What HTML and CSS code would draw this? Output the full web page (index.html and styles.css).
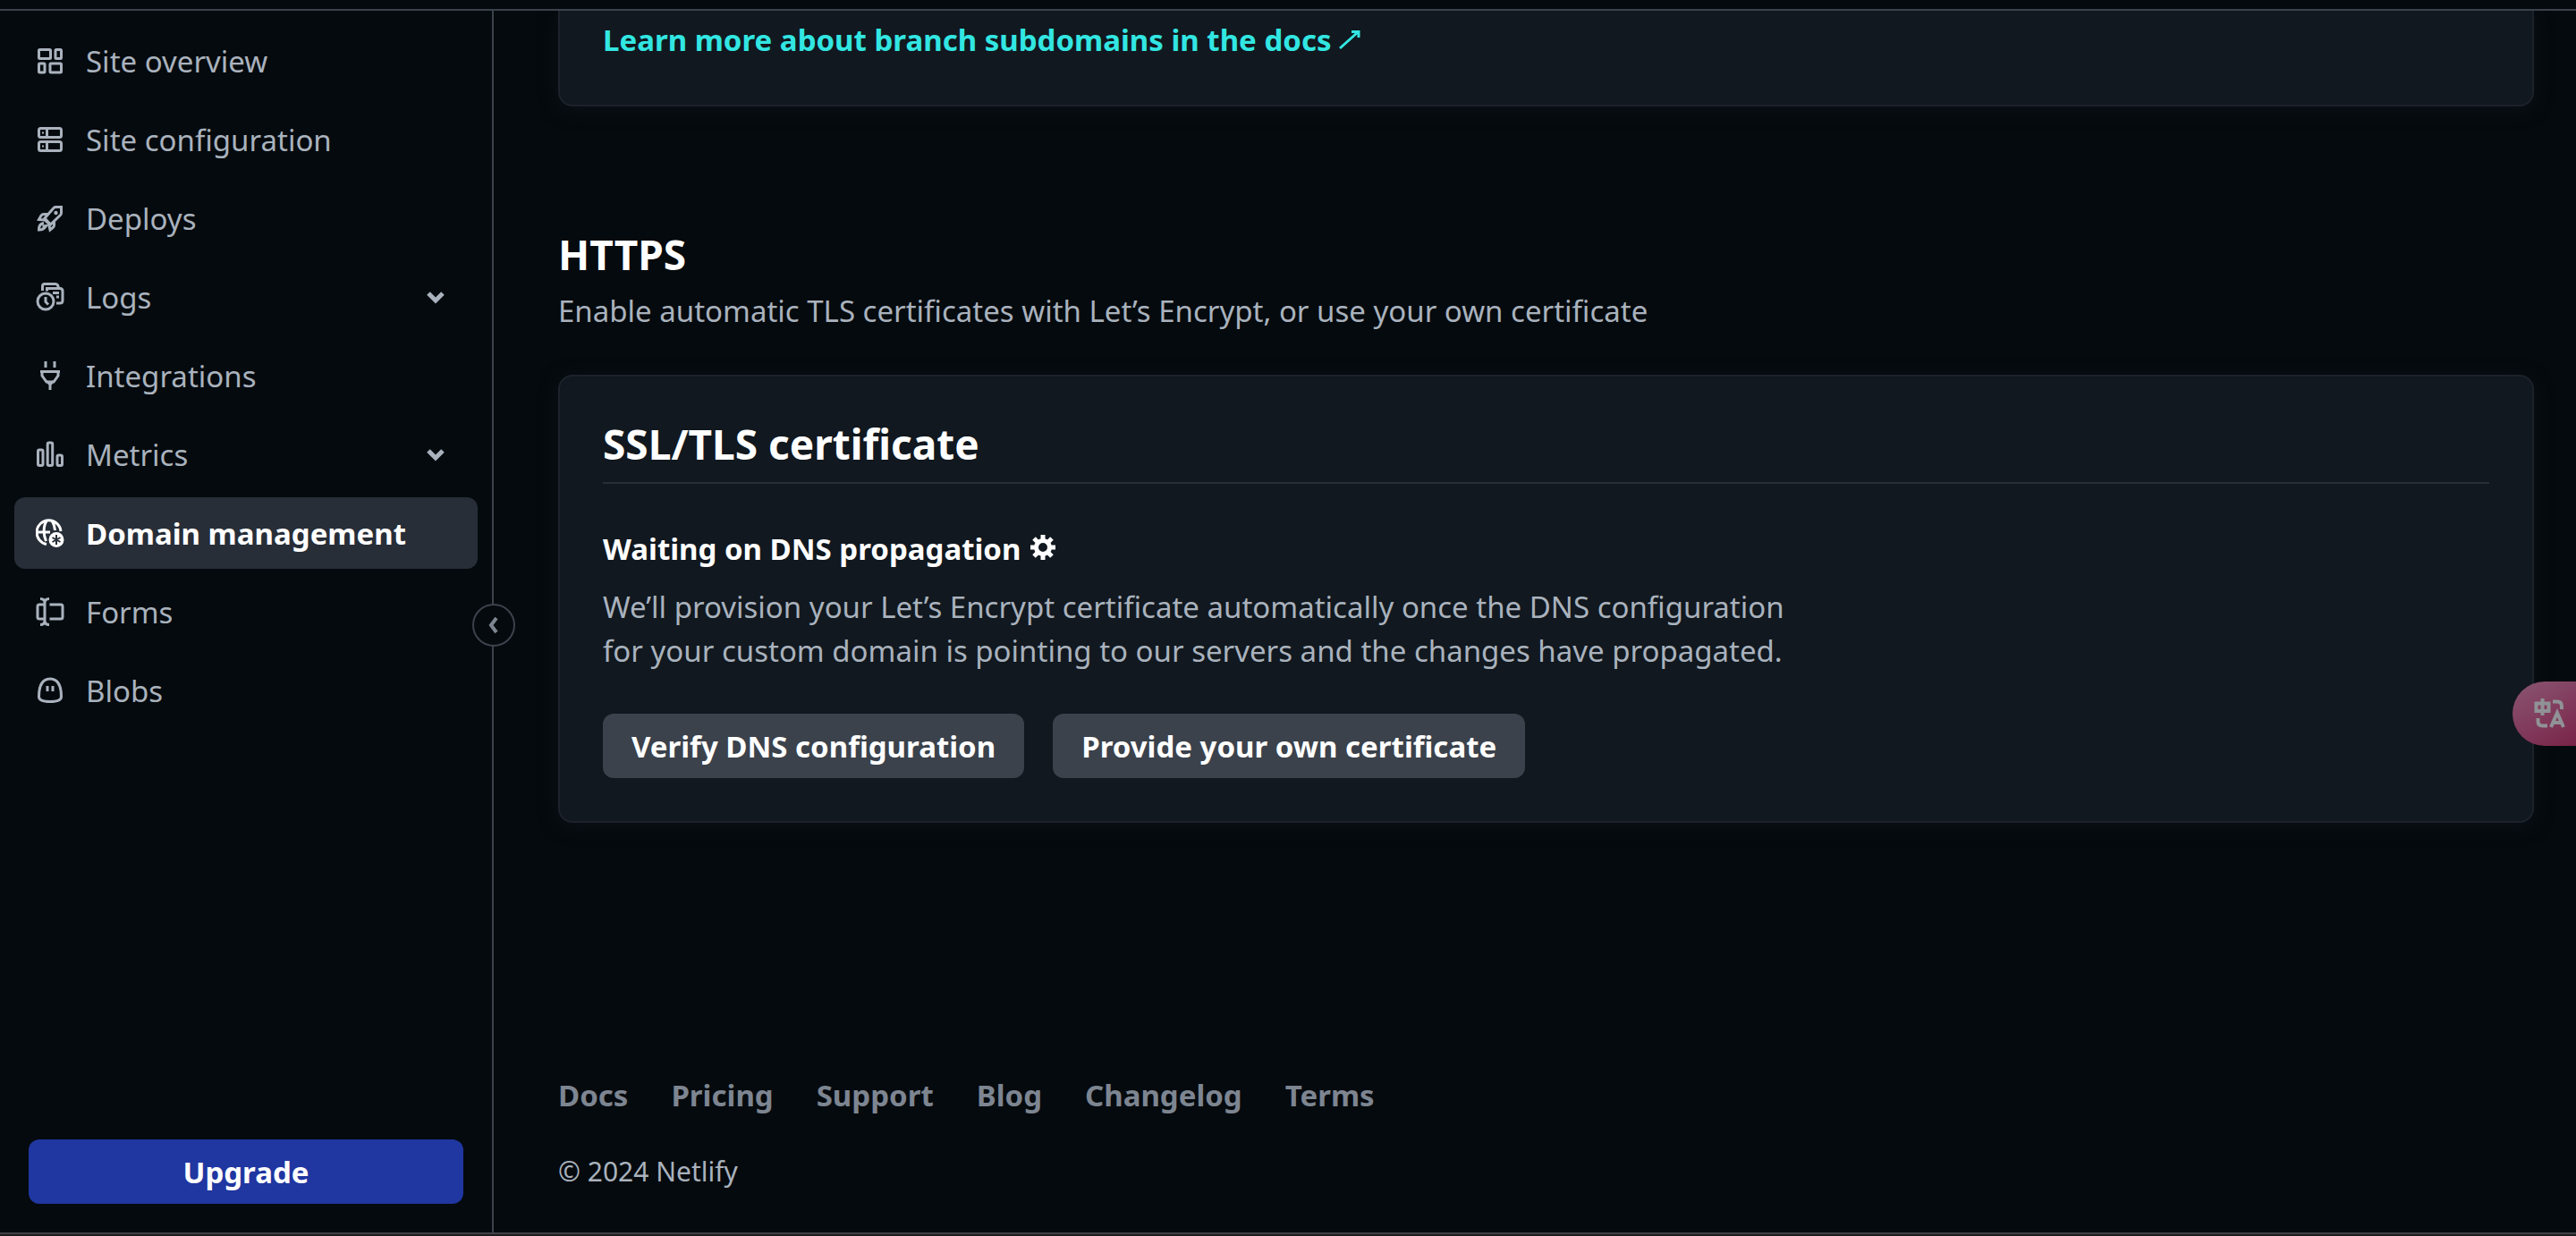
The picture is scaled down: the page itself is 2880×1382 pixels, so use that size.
FILE: index.html
```html
<!DOCTYPE html>
<html lang="en">
<head>
<meta charset="utf-8">
<meta name="viewport" content="width=device-width, initial-scale=1">
<title>Domain management | Netlify</title>
<link rel="stylesheet" href="styles.css">
</head>
<body>
<div class="app">
  <aside class="sidebar">
    <nav class="nav" aria-label="Site">
      <a class="nav-item" href="#overview">
        <svg class="icon" viewBox="0 0 32 32" aria-hidden="true"><rect x="3.500" y="3.500" width="13" height="10" rx="1"/><rect x="22" y="3.500" width="6.500" height="10" rx="1"/><rect x="3.500" y="19" width="6.500" height="10" rx="1"/><rect x="16" y="19" width="12.500" height="10" rx="1"/></svg>
        <span class="nav-label">Site overview</span>
      </a>
      <a class="nav-item" href="#configuration">
        <svg class="icon" viewBox="0 0 32 32" aria-hidden="true"><rect x="3.500" y="3.500" width="25" height="10" rx="2"/><rect x="3.500" y="18.500" width="25" height="10" rx="2"/><path d="M12.500 3.500v10M12.500 18.500v10"/><path class="dot" d="M7 7.500h2v2H7zM7 22.500h2v2H7z"/></svg>
        <span class="nav-label">Site configuration</span>
      </a>
      <a class="nav-item" href="#deploys">
        <svg class="icon" viewBox="0 0 32 32" aria-hidden="true"><path d="M10 16 20 4.500Q21 3.500 22.500 3.500h6v6.500q0 1.500-1 2.500L16.500 23z"/><path d="M14 11.500H9q-2 0-3 1.500l-2.500 4.500 6.500.5M20.500 19.500V24q0 1.500-1.500 2.500l-3 2.500-1.500-6.500M9 17l7 6.500M9 21.500Q3.500 22 3.500 29q5.500 0 8-4.500l-4 .5"/><circle class="dot" cx="22.500" cy="10" r="2.200"/></svg>
        <span class="nav-label">Deploys</span>
      </a>
      <a class="nav-item" href="#logs">
        <svg class="icon" viewBox="0 0 32 32" aria-hidden="true"><circle cx="11" cy="21" r="9"/><path d="M11 16v5.500l3 3M7.500 9V4q0-2.500 2.500-2.500h12Q25 1.500 25.500 6.500M12.500 9.500V6.500H27q3 0 3 3V20q0 3-3 3h-4M19 11.500h7M23 16h3"/></svg>
        <span class="nav-label">Logs</span>
        <svg class="chevron" viewBox="0 0 32 32" aria-hidden="true"><path d="M8 12l8 8 8-8"/></svg>
      </a>
      <a class="nav-item" href="#integrations">
        <svg class="icon" viewBox="0 0 32 32" aria-hidden="true"><path d="M11 0v7M21 0v7M5 11.500h22M7 12v4l5 7h8l5-7v-4M12 22l4 4 4-4M16 25v7"/></svg>
        <span class="nav-label">Integrations</span>
      </a>
      <a class="nav-item" href="#metrics">
        <svg class="icon" viewBox="0 0 32 32" aria-hidden="true"><rect x="2.500" y="11" width="5.500" height="17.500" rx="1.500"/><rect x="13.200" y="3" width="5.500" height="25.500" rx="1.500"/><rect x="24" y="17" width="5.500" height="11.500" rx="1.500"/></svg>
        <span class="nav-label">Metrics</span>
        <svg class="chevron" viewBox="0 0 32 32" aria-hidden="true"><path d="M8 12l8 8 8-8"/></svg>
      </a>
      <a class="nav-item active" href="#domains" aria-current="page">
        <svg class="icon" viewBox="0 0 32 32" aria-hidden="true"><path d="M12 28.500A13.500 13.500 0 1 1 28 14M2 15h14M11.500 25C8 17 8.500 7 12.500 2M18 2q3 5 3.500 11"/><circle class="dot" cx="23" cy="23.500" r="8.500"/><path class="cut" d="M23 18v11M18.500 21l9 5M27.500 21l-9 5"/></svg>
        <span class="nav-label">Domain management</span>
      </a>
      <a class="nav-item" href="#forms">
        <svg class="icon" viewBox="0 0 32 32" aria-hidden="true"><path d="M5 1.500q5 0 5 4.500v20q0 4.500-5 4.500M15 1.500q-5 0-5 4.500M15 30.500q-5 0-5-4.500M10 8H4q-2 0-2 2v12q0 2 2 2h6M15.500 8H28q2 0 2 2v12q0 2-2 2H15.500"/></svg>
        <span class="nav-label">Forms</span>
      </a>
      <a class="nav-item" href="#blobs">
        <svg class="icon" viewBox="0 0 32 32" aria-hidden="true"><path d="M16 3C8 3 3.500 10 3.500 23q0 5.500 12.500 5.500T28.500 23C28.500 10 24 3 16 3z"/><path d="M13 11v6M19 11v6"/></svg>
        <span class="nav-label">Blobs</span>
      </a>
    </nav>
    <button class="btn btn-primary" type="button">Upgrade</button>
    <button class="collapse" type="button" aria-label="Collapse sidebar"><svg class="collapse-icon" viewBox="0 0 24 24" aria-hidden="true"><path d="M15 4l-6 8 6 8"/></svg></button>
  </aside>
  <main class="main">
    <section class="card card-cut">
      <a class="doc-link" href="#docs">Learn more about branch subdomains in the docs <svg class="arrow" viewBox="0 0 24 24" aria-hidden="true"><path d="M1 21 21 3M14 2.500h8V9"/></svg></a>
    </section>
    <header class="section-head">
      <h2 class="title">HTTPS</h2>
      <p class="text">Enable automatic TLS certificates with Let’s Encrypt, or use your own certificate</p>
    </header>
    <section class="card">
      <h3 class="title card-title">SSL/TLS certificate</h3>
      <h4 class="status">Waiting on DNS propagation <svg class="gear" viewBox="0 0 28 28" aria-hidden="true"><circle cx="14" cy="14" r="7.500"/><path d="M14 0v5M14 23v5M0 14h5M23 14h5M4 4l4 4M20 20l4 4M24 4l-4 4M8 20l-4 4"/></svg></h4>
      <p class="text">We’ll provision your Let’s Encrypt certificate automatically once the DNS configuration<br>for your custom domain is pointing to our servers and the changes have propagated.</p>
      <div class="actions">
        <button class="btn" type="button">Verify DNS configuration</button>
        <button class="btn" type="button">Provide your own certificate</button>
      </div>
    </section>
    <footer class="footer">
      <nav class="footer-links" aria-label="Footer">
        <a href="#docs">Docs</a><a href="#pricing">Pricing</a><a href="#support">Support</a><a href="#blog">Blog</a><a href="#changelog">Changelog</a><a href="#terms">Terms</a>
      </nav>
      <p class="copyright">© 2024 Netlify</p>
    </footer>
  </main>
</div>
<button class="translate" type="button" aria-label="Translate page"><svg class="translate-icon" viewBox="0 0 36 36" aria-hidden="true"><path d="M2.500 6.500h14v8.500h-14zM9.500 1v19M21 4.500h5q5 0 5 5V13M4.500 23v3.500q0 5 5 5H15M19 33l7-16 7 16M21.500 28h9"/></svg></button>
</body>
</html>
```
FILE: styles.css
```css
* {
  box-sizing: border-box;
}

body {
  margin: 0;
  background: #050a0e;
  color: #a9b2bd;
  font-family: "Noto Sans", sans-serif;
  font-size: 33px;
  line-height: 49px;
}

h2, h3, h4, p {
  margin: 0;
}

a {
  color: inherit;
  text-decoration: none;
}

svg {
  flex: none;
  fill: none;
  stroke: currentColor;
  stroke-width: 3;
}

.dot {
  fill: currentColor;
  stroke: none;
}

.app {
  display: grid;
  grid-template-columns: 552px 1fr;
  min-height: 100vh;
  padding-top: 10px;
  border-bottom: 2px solid #1c1b20;
}

.sidebar {
  position: relative;
  display: flex;
  flex-direction: column;
  justify-content: space-between;
  padding: 16px 16px 32px;
  border: solid #3b424c;
  border-width: 2px 2px 2px 0;
  border-bottom-color: #414146;
}

.nav {
  display: flex;
  flex-direction: column;
  gap: 8px;
}

.nav-item {
  display: flex;
  align-items: center;
  gap: 24px;
  height: 80px;
  padding: 0 24px;
  border-radius: 12px;
}

.nav-item.active {
  background: #272e38;
  color: #fff;
  font-weight: 700;
}

.nav-label {
  flex: 1;
}

.icon {
  width: 32px;
  height: 32px;
}

.cut {
  stroke: #272e38;
  stroke-width: 2;
}

.chevron {
  width: 32px;
  height: 32px;
  margin-right: 7px;
  stroke-width: 5;
}

.btn {
  height: 72px;
  padding: 0 32px;
  border: 0;
  border-radius: 12px;
  background: #3b424c;
  color: #fff;
  font: inherit;
  font-weight: 700;
}

.btn-primary {
  margin: 0 16px;
  background: #2036a1;
}

.collapse {
  position: absolute;
  top: 663px;
  right: -26px;
  display: grid;
  place-items: center;
  width: 48px;
  height: 48px;
  padding: 0;
  border: 2px solid #3b424c;
  border-radius: 50%;
  background: #050a0e;
  color: #7d8591;
}

.collapse-icon {
  width: 24px;
  height: 24px;
  stroke-width: 4;
}

.main {
  display: flex;
  flex-direction: column;
  padding: 0 47px 44px 72px;
  border: solid #3b424c;
  border-width: 2px 0;
  border-bottom-color: #414146;
}

.card {
  padding: 48px;
  border: 2px solid #1d222b;
  border-radius: 16px;
  background: #11181f;
  box-shadow: 0 4px 20px #0c1118;
}

.card-cut {
  padding-top: 8px;
  border-top: 0;
  border-radius: 0 0 16px 16px;
  clip-path: inset(0 -40px -40px);
}

.doc-link {
  color: #32e6e2;
  font-weight: 700;
}

.arrow {
  width: 24px;
  height: 24px;
  stroke-width: 3;
}

.section-head {
  display: grid;
  gap: 12px;
  padding: 138px 0 47px;
}

.title {
  color: #fff;
  font-size: 46px;
  line-height: 54px;
}

.card-title {
  padding-bottom: 16px;
  border-bottom: 2px solid #272e38;
}

.status {
  padding: 48px 0 16px;
  color: #fff;
  font-size: 33px;
}

.gear {
  width: 28px;
  height: 28px;
  margin-left: 2px;
  stroke-width: 5;
}

.actions {
  display: flex;
  gap: 32px;
  padding-top: 46px;
}

.footer {
  margin-top: auto;
}

.footer-links {
  display: flex;
  gap: 48px;
  color: #7d8591;
  font-weight: 700;
}

.copyright {
  padding-top: 36px;
  font-size: 30px;
}

.translate {
  position: fixed;
  top: 762px;
  right: 0;
  display: flex;
  align-items: center;
  width: 71px;
  height: 72px;
  padding: 0 0 0 24px;
  border: 0;
  border-radius: 36px 0 0 36px;
  background: linear-gradient(150deg, #8a5672, #792448);
  color: #909296;
}

.translate-icon {
  width: 36px;
  height: 36px;
  stroke-width: 4;
}
```
